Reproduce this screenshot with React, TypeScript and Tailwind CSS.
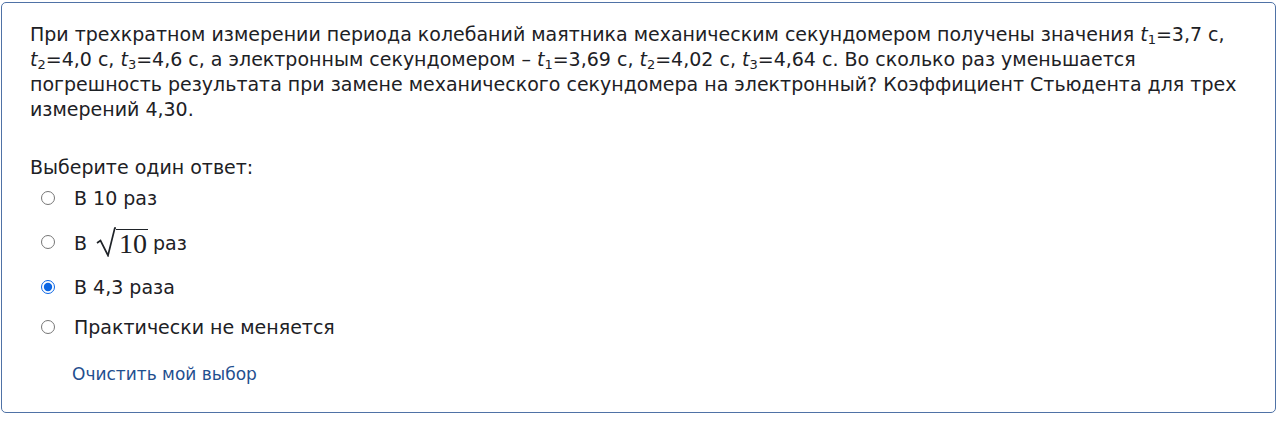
import React from 'react';

const T = ({ n }: { n: number }) => (
  <>
    <i>t</i>
    <sub className="text-[13px] not-italic">{n}</sub>
  </>
);

const Sqrt10 = () => (
  <span className="inline-flex items-end ml-[9px] mr-[5px] align-[-7px]">
    <svg width="20" height="30" viewBox="0 0 20 30" className="block">
      <path d="M1 16 L4.5 13.5 L12 28.5 L18.8 1 L20 1" fill="none" stroke="#1f2328" strokeWidth="1.7" strokeLinejoin="miter" />
    </svg>
    <span className="border-t-[1.7px] border-[#1f2328] leading-[27px] text-[28px] pl-[3px] pr-[1px]" style={{ fontFamily: '"Liberation Serif", serif' }}>
      10
    </span>
  </span>
);

const Option = ({ children, checked = false }: { children: React.ReactNode; checked?: boolean }) => (
  <label className="flex items-center gap-[19px] pl-[11px]">
    <input type="radio" name="q" defaultChecked={checked} className="w-[14px] h-[14px] m-0 accent-[#0b66e4]" />
    <span>{children}</span>
  </label>
);

export default function App() {
  return (
    <div className="bg-white pt-[2px] pl-[1px] pr-[4px] pb-[8px]" style={{ fontFamily: '"DejaVu Sans", "Noto Sans", sans-serif' }}>
      <div className="border border-[#4f72a6] rounded-[5px] pl-[28px] pr-[20px] pt-[19px] pb-[26px] text-[19px] leading-[25px] text-[#1d2125]">
        <p className="whitespace-nowrap">
          При трехкратном измерении периода колебаний маятника механическим секундомером получены значения <T n={1} />=3,7 с,
          <br />
          <T n={2} />=4,0 с, <T n={3} />=4,6 с, а электронным секундомером – <T n={1} />=3,69 с, <T n={2} />=4,02 с, <T n={3} />=4,64 с. Во сколько раз уменьшается
          <br />
          погрешность результата при замене механического секундомера на электронный? Коэффициент Стьюдента для трех
          <br />
          измерений 4,30.
        </p>
        <div className="mt-[33px]">Выберите один ответ:</div>
        <div className="flex flex-col">
          <div className="h-[36px] flex items-center"><Option>В 10 раз</Option></div>
          <div className="h-[46px] flex items-center pt-[6px]"><Option>В<Sqrt10 />раз</Option></div>
          <div className="h-[44px] flex items-center pt-[6px]"><Option checked>В 4,3 раза</Option></div>
          <div className="h-[40px] flex items-center pt-[2px]"><Option>Практически не меняется</Option></div>
        </div>
        <div className="pl-[42px] mt-[16px] text-[17px] leading-[24px] text-[#1f4f8f]">Очистить мой выбор</div>
      </div>
    </div>
  );
}
